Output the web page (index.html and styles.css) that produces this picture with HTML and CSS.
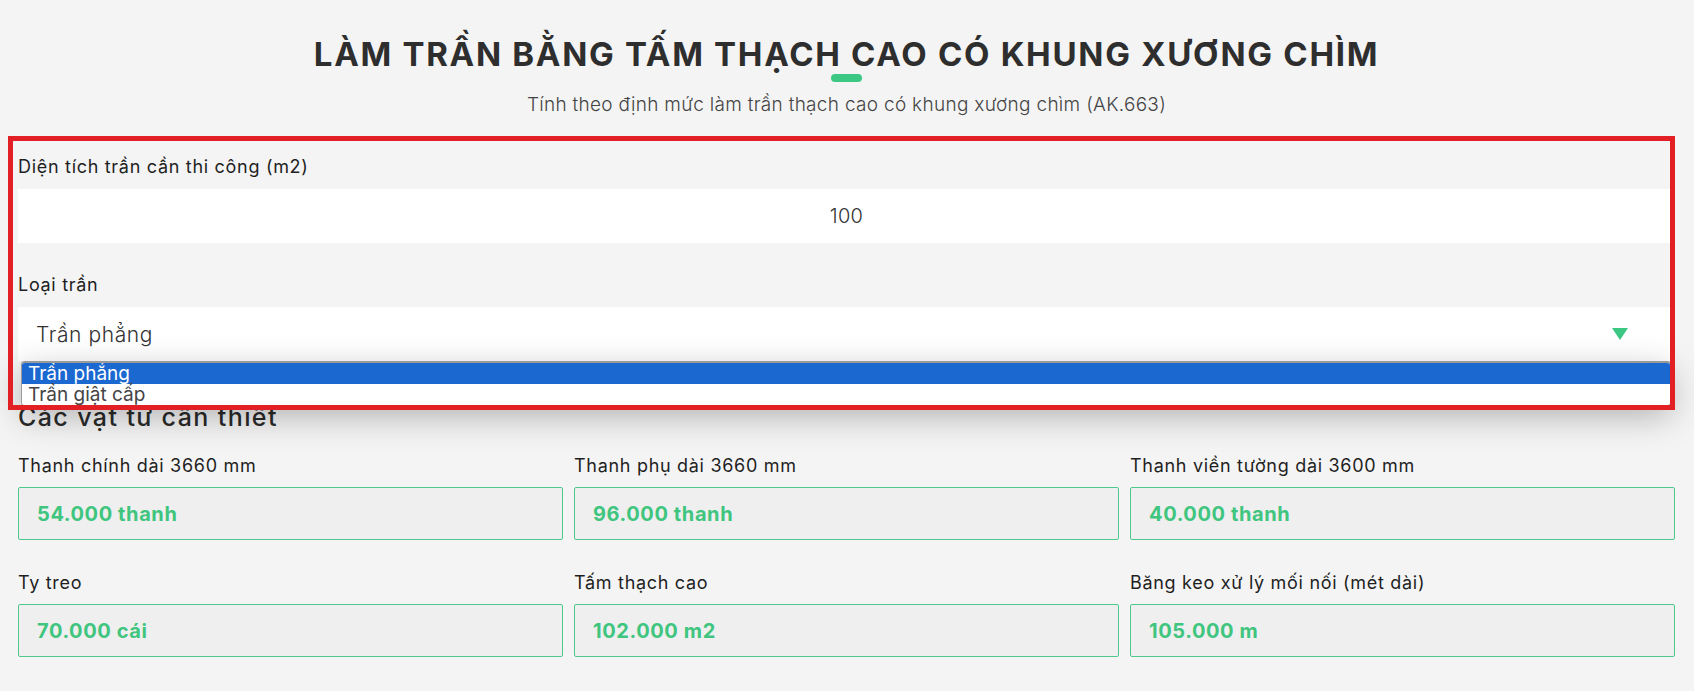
FILE: index.html
```html
<!DOCTYPE html>
<html lang="vi">
<head>
<meta charset="utf-8">
<title>Làm trần bằng tấm thạch cao có khung xương chìm</title>
<link rel="stylesheet" href="styles.css">
</head>
<body>
<div class="page">
  <header class="header">
    <h1 class="title">LÀM TRẦN BẰNG TẤM THẠCH CAO CÓ KHUNG XƯƠNG CHÌM</h1>
    <div class="title-bar"></div>
    <p class="subtitle">Tính theo định mức làm trần thạch cao có khung xương chìm (AK.663)</p>
  </header>

  <section class="form">
    <div class="field">
      <label class="label">Diện tích trần cần thi công (m2)</label>
      <div class="input">100</div>
    </div>
    <div class="field field-select">
      <label class="label">Loại trần</label>
      <div class="select">
        <span class="select-value">Trần phẳng</span>
        <span class="caret"></span>
        <div class="dropdown">
          <div class="option option-active">Trần phẳng</div>
          <div class="option">Trần giật cấp</div>
        </div>
      </div>
    </div>
  </section>

  <section class="results">
    <h2 class="results-title">Các vật tư cần thiết</h2>
    <div class="grid">
      <div class="item">
        <div class="label">Thanh chính dài 3660 mm</div>
        <div class="value">54.000 thanh</div>
      </div>
      <div class="item">
        <div class="label">Thanh phụ dài 3660 mm</div>
        <div class="value">96.000 thanh</div>
      </div>
      <div class="item">
        <div class="label">Thanh viền tường dài 3600 mm</div>
        <div class="value">40.000 thanh</div>
      </div>
      <div class="item">
        <div class="label">Ty treo</div>
        <div class="value">70.000 cái</div>
      </div>
      <div class="item">
        <div class="label">Tấm thạch cao</div>
        <div class="value">102.000 m2</div>
      </div>
      <div class="item">
        <div class="label">Băng keo xử lý mối nối (mét dài)</div>
        <div class="value">105.000 m</div>
      </div>
    </div>
  </section>

  <div class="highlight"></div>
</div>
</body>
</html>
```

FILE: styles.css
```css
* { box-sizing: border-box; }

html, body {
  margin: 0;
  padding: 0;
  background: #f4f4f4;
}

body {
  font-family: "Inter", "Noto Sans", sans-serif;
  color: #222;
}

.page {
  position: relative;
  padding: 34px 19px 40px 18px;
  min-height: 691px;
}

.header {
  text-align: center;
}

.title {
  margin: 0;
  font-size: 33px;
  line-height: 40px;
  font-weight: 700;
  color: #2e2e2e;
  letter-spacing: 1.7px;
}

.title-bar {
  width: 31px;
  height: 8px;
  border-radius: 4px;
  background: #3cc882;
  margin: 0 auto;
}

.subtitle {
  margin: 11px 0 0;
  font-size: 19px;
  line-height: 24px;
  font-weight: 300;
  color: #444;
  letter-spacing: 0.3px;
}

.form {
  margin-top: 39px;
}

.field {
  display: flex;
  flex-direction: column;
}

.field-select {
  margin-top: 31px;
}

.label {
  display: block;
  font-size: 18px;
  line-height: 22px;
  font-weight: 400;
  color: #1f1f1f;
  letter-spacing: 0.7px;
}

.input {
  margin-top: 11px;
  height: 54px;
  background: #fff;
  display: flex;
  align-items: center;
  justify-content: center;
  font-size: 20px;
  font-weight: 300;
  color: #333;
  letter-spacing: 0.3px;
}

.select {
  position: relative;
  margin-top: 11px;
  height: 54px;
  background: #fff;
  display: flex;
  align-items: center;
  justify-content: space-between;
  padding: 0 47px 0 18px;
}

.select-value {
  font-size: 21px;
  font-weight: 300;
  color: #333;
  letter-spacing: 0.6px;
}

.caret {
  width: 0;
  height: 0;
  border-left: 8px solid transparent;
  border-right: 8px solid transparent;
  border-top: 12px solid #3cc882;
}

.dropdown {
  position: absolute;
  top: 100%;
  left: 3px;
  right: 4px;
  background: #fff;
  border: 1px solid #9a9a9a;
  border-top-width: 2px;
  border-radius: 4px;
  overflow: hidden;
  box-shadow: 0 10px 34px rgba(0, 0, 0, 0.28);
  z-index: 5;
}

.option {
  height: 21px;
  line-height: 21px;
  padding-left: 6px;
  font-size: 19px;
  font-weight: 400;
  color: #444;
  background: #fff;
}

.option-active {
  background: #1b68d1;
  color: #fff;
}

.results {
  margin-top: 41px;
}

.results-title {
  margin: 0;
  font-size: 25px;
  line-height: 30px;
  font-weight: 500;
  color: #2a2a2a;
  letter-spacing: 1.4px;
}

.grid {
  margin-top: 23px;
  display: grid;
  grid-template-columns: repeat(3, 1fr);
  column-gap: 11px;
  row-gap: 32px;
}

.value {
  margin-top: 10px;
  height: 53px;
  border: 1px solid #4ec98c;
  border-radius: 2px;
  background: #efefef;
  display: flex;
  align-items: center;
  padding-left: 18px;
  font-size: 20px;
  font-weight: 700;
  color: #40c57f;
  letter-spacing: 0.6px;
}

.highlight {
  position: absolute;
  left: 8px;
  top: 136px;
  width: 1667px;
  height: 274px;
  border: 5px solid #e31f26;
  pointer-events: none;
  z-index: 10;
}
```
